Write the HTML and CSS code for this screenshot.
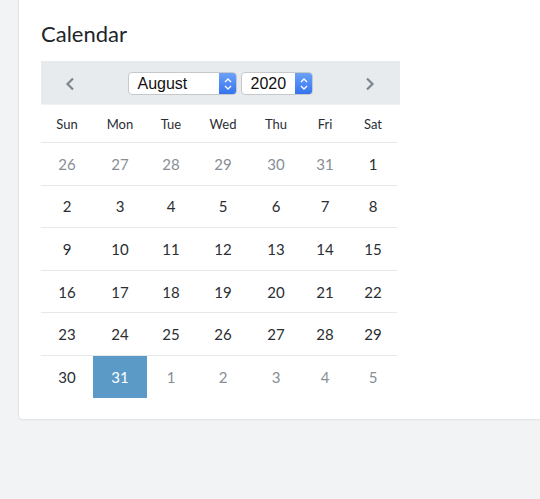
FILE: index.html
```html
<!DOCTYPE html>
<html>
<head>
<meta charset="utf-8">
<link rel="stylesheet" href="styles.css">
</head>
<body>
<div class="card">
  <h2 class="title">Calendar</h2>
  <div class="nav">
    <span class="arrow"><svg width="10" height="14" viewBox="0 0 10 14"><path d="M8 1.5 L2.5 7 L8 12.5" fill="none" stroke="#7d878e" stroke-width="2.2"/></svg></span>
    <div class="selects">
      <div class="select month"><span class="sel-text">August</span><span class="sel-btn"><svg width="10" height="16" viewBox="0 0 10 16"><path d="M2 6 L5 3 L8 6 M2 10 L5 13 L8 10" fill="none" stroke="#fff" stroke-width="1.4"/></svg></span></div>
      <div class="select year"><span class="sel-text">2020</span><span class="sel-btn"><svg width="10" height="16" viewBox="0 0 10 16"><path d="M2 6 L5 3 L8 6 M2 10 L5 13 L8 10" fill="none" stroke="#fff" stroke-width="1.4"/></svg></span></div>
    </div>
    <span class="arrow"><svg width="10" height="14" viewBox="0 0 10 14"><path d="M2 1.5 L7.5 7 L2 12.5" fill="none" stroke="#7d878e" stroke-width="2.2"/></svg></span>
  </div>
  <div class="grid">
    <div class="dow">Sun</div><div class="dow">Mon</div><div class="dow">Tue</div><div class="dow">Wed</div><div class="dow">Thu</div><div class="dow">Fri</div><div class="dow">Sat</div>
    <div class="day muted">26</div><div class="day muted">27</div><div class="day muted">28</div><div class="day muted">29</div><div class="day muted">30</div><div class="day muted">31</div><div class="day">1</div>
    <div class="day">2</div><div class="day">3</div><div class="day">4</div><div class="day">5</div><div class="day">6</div><div class="day">7</div><div class="day">8</div>
    <div class="day">9</div><div class="day">10</div><div class="day">11</div><div class="day">12</div><div class="day">13</div><div class="day">14</div><div class="day">15</div>
    <div class="day">16</div><div class="day">17</div><div class="day">18</div><div class="day">19</div><div class="day">20</div><div class="day">21</div><div class="day">22</div>
    <div class="day">23</div><div class="day">24</div><div class="day">25</div><div class="day">26</div><div class="day">27</div><div class="day">28</div><div class="day">29</div>
    <div class="day">30</div><div class="day selected">31</div><div class="day muted">1</div><div class="day muted">2</div><div class="day muted">3</div><div class="day muted">4</div><div class="day muted">5</div>
  </div>
</div>
</body>
</html>
```
FILE: styles.css
```css
html, body {
  margin: 0;
  padding: 0;
}
body {
  background: #f2f3f5;
  font-family: Lato, "Open Sans", sans-serif;
  color: #212529;
  height: 499px;
  overflow: hidden;
}
.card {
  margin: -6px -20px 0 18px;
  background: #fff;
  border: 1px solid #e3e6e9;
  border-radius: 4px;
  padding: 25px 0 21px 22px;
  box-shadow: 0 1px 2px rgba(0,0,0,0.03);
}
.title {
  margin: 0 0 13px 0;
  font-size: 22px;
  font-weight: 400;
  line-height: 28px;
  color: #212529;
}
.nav {
  width: 359px;
  height: 44px;
  box-sizing: border-box;
  background: #e7ebee;
  border-bottom: 1px solid #f0f2f4;
  display: flex;
  align-items: center;
  justify-content: space-between;
  padding: 0 25px 0 24px;
}
.arrow {
  display: flex;
  width: 10px;
  height: 14px;
  margin-top: 2px;
}
.selects {
  display: flex;
  gap: 4px;
  margin-top: 2px;
}
.select {
  display: flex;
  height: 23px;
  box-sizing: border-box;
  border: 1px solid #c6c9cc;
  border-radius: 4px;
  background: #fff;
  overflow: hidden;
  font-family: "Liberation Sans", Arial, sans-serif;
  font-size: 16px;
  color: #111;
}
.month { width: 109px; }
.year { width: 72px; }
.sel-text {
  flex: 1;
  padding-left: 9px;
  line-height: 21px;
}
.sel-btn {
  width: 18px;
  margin: -1px -1px -1px 0;
  background: linear-gradient(#6ea4fa, #3271ee);
  border-radius: 0 4px 4px 0;
  display: flex;
  align-items: center;
  justify-content: center;
}
.grid {
  width: 356px;
  display: grid;
  grid-template-columns: 52px 54px 48px 56px 50px 48px 48px;
}
.dow {
  height: 37px;
  display: flex;
  align-items: center;
  justify-content: center;
  font-size: 13px;
  padding-top: 1px;
  box-sizing: border-box;
  color: #2a2e33;
}
.day {
  height: 42.6px;
  box-sizing: border-box;
  border-top: 1px solid #e6e9ec;
  display: flex;
  align-items: center;
  justify-content: center;
  font-size: 15px;
  color: #2a2e33;
}
.day.muted {
  color: #878e95;
}
.day.selected {
  background: #5b9ac6;
  color: #fff;
}
```
